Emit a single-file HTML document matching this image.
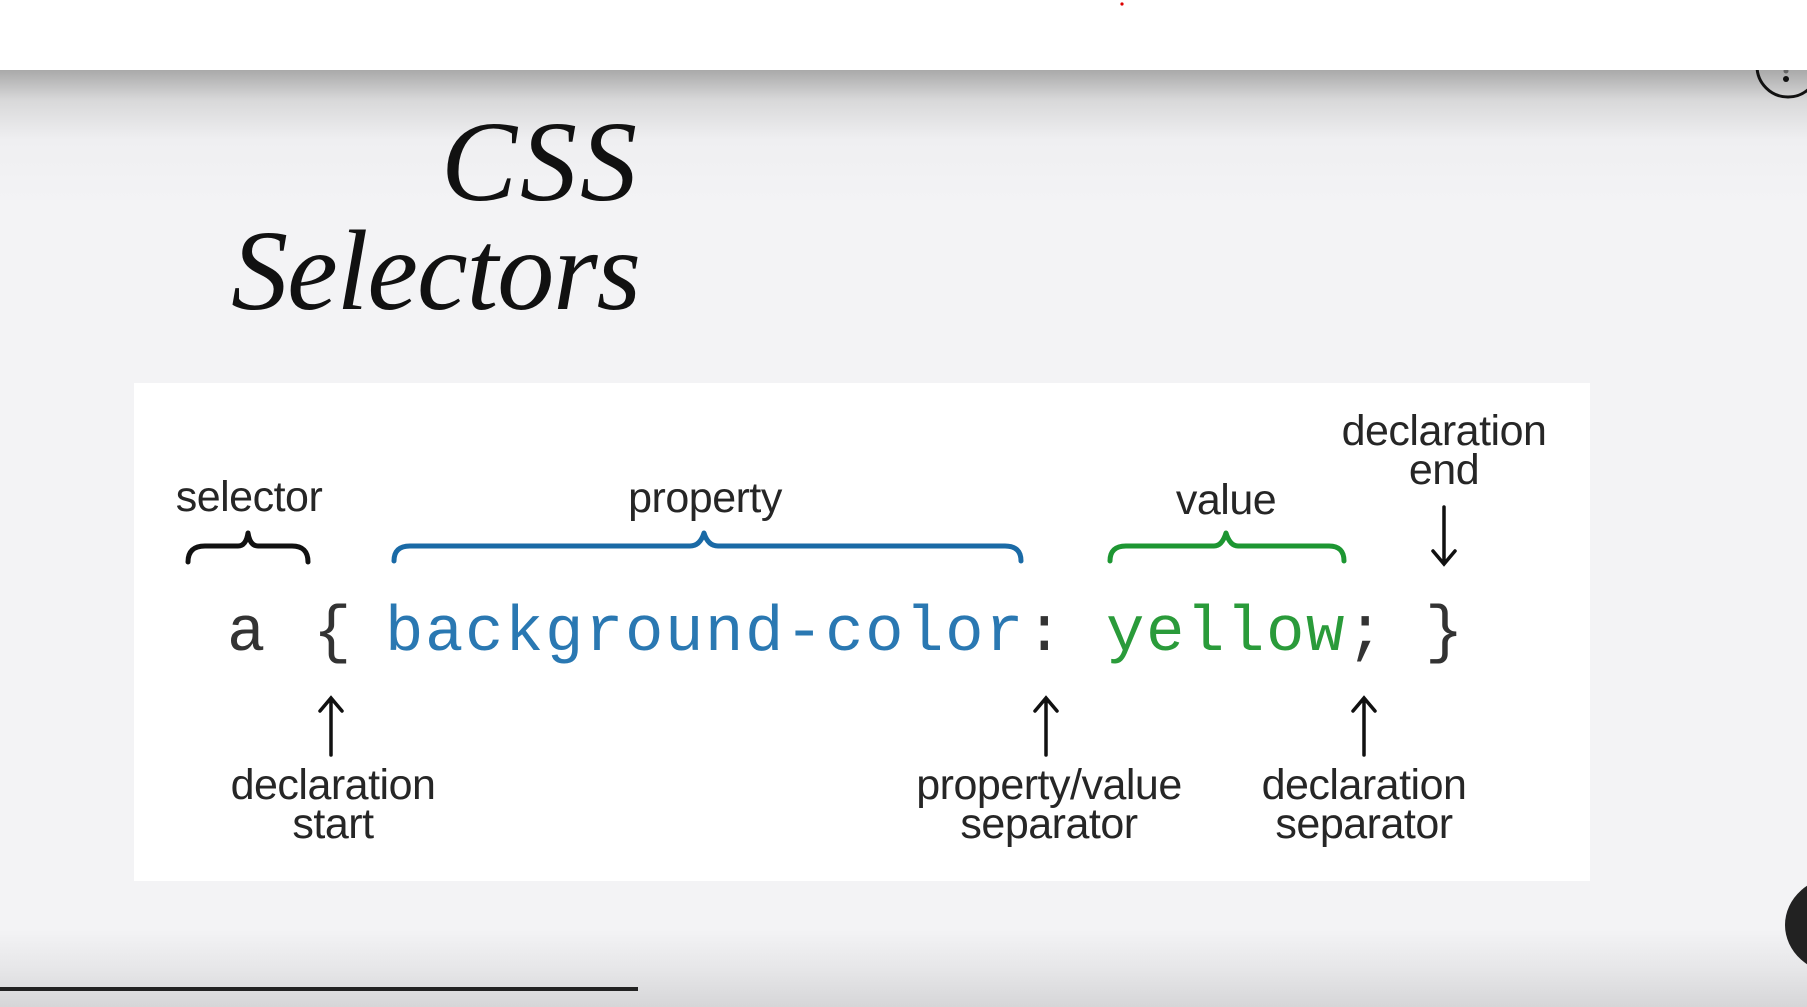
<!DOCTYPE html>
<html><head><meta charset="utf-8"><style>
html,body{margin:0;padding:0;}
body{width:1807px;height:1007px;position:relative;overflow:hidden;font-family:"Liberation Sans",sans-serif;
background:linear-gradient(to bottom,#fff 0,#fff 70px,#a9a9a9 70px,#d8d8d9 100px,#efeff1 140px,#f3f3f5 200px,#f3f3f5 930px,#e6e6e8 970px,#d6d6d8 1007px);}
.t{position:absolute;white-space:nowrap;}
.title{font-family:"Liberation Serif",serif;font-style:italic;font-size:114px;color:#111;right:1167px;text-align:right;line-height:1;}
.box{position:absolute;left:134px;top:383px;width:1456px;height:498px;background:#fff;}
.lab{position:absolute;font-size:43px;color:#262626;text-align:center;line-height:39px;letter-spacing:-0.5px;transform:translateX(-50%);}
.code{position:absolute;font-family:"Liberation Mono",monospace;font-size:64px;line-height:1;top:602px;}
</style></head><body>
<div class="t title" style="top:105px;letter-spacing:3px">CSS</div>
<div class="t title" style="top:214px;letter-spacing:-1px">Selectors</div>
<div class="box"></div>

<div class="lab" style="left:249px;top:478px">selector</div>
<div class="lab" style="left:705px;top:479px">property</div>
<div class="lab" style="left:1226px;top:481px">value</div>
<div class="lab" style="left:1444px;top:412px">declaration<br>end</div>

<svg style="position:absolute;left:0;top:0" width="1807" height="1007">
 <g fill="none" stroke-width="5" stroke-linecap="round" stroke-linejoin="round">
  <path d="M188 562 Q188 546 205 546 L238 546 Q246 546 248 533 Q250 546 258 546 L292 546 Q308 546 308 562" stroke="#111"/>
  <path d="M394 561 Q394 546 410 546 L690 546 Q700 546 704 533 Q708 546 718 546 L1005 546 Q1021 546 1021 561" stroke="#1a6aa6"/>
  <path d="M1110 561 Q1110 546 1126 546 L1214 546 Q1222 546 1226 533 Q1230 546 1238 546 L1329 546 Q1344 546 1344 561" stroke="#1d9632"/>
 </g>
 <g stroke="#111" stroke-width="3.5" fill="none" stroke-linecap="round">
  <path d="M1444 507 L1444 563 M1433 551 L1444 564 L1455 551"/>
  <path d="M331 755 L331 699 M320 711 L331 698 L342 711"/>
  <path d="M1046 755 L1046 699 M1035 711 L1046 698 L1057 711"/>
  <path d="M1364 755 L1364 699 M1353 711 L1364 698 L1375 711"/>
 </g>
 <circle cx="1788" cy="66" r="31" fill="none" stroke="#111" stroke-width="3"/>
 <circle cx="1786" cy="79" r="3" fill="#111"/>
 <circle cx="1786" cy="71" r="2.5" fill="#666"/>
 <rect x="0" y="0" width="1807" height="70" fill="#fff"/>
 <circle cx="1122" cy="4" r="1.6" fill="#d00"/>
 <ellipse cx="1840" cy="925" rx="55" ry="49" fill="#222"/>
 <rect x="0" y="987" width="638" height="4" fill="#222"/>
</svg>

<div class="code" style="left:227px;color:#333">a</div>
<div class="code" style="left:313px;color:#333">{</div>
<div class="code" style="left:385px;color:#2a78b2;letter-spacing:1.6px">background-color<span style="color:#333">:</span></div>
<div class="code" style="left:1106px;color:#2a9b3a;letter-spacing:1.6px">yellow<span style="color:#333">;</span></div>
<div class="code" style="left:1425px;color:#333">}</div>

<div class="lab" style="left:333px;top:766px">declaration<br>start</div>
<div class="lab" style="left:1049px;top:766px">property/value<br>separator</div>
<div class="lab" style="left:1364px;top:766px">declaration<br>separator</div>
</body></html>
